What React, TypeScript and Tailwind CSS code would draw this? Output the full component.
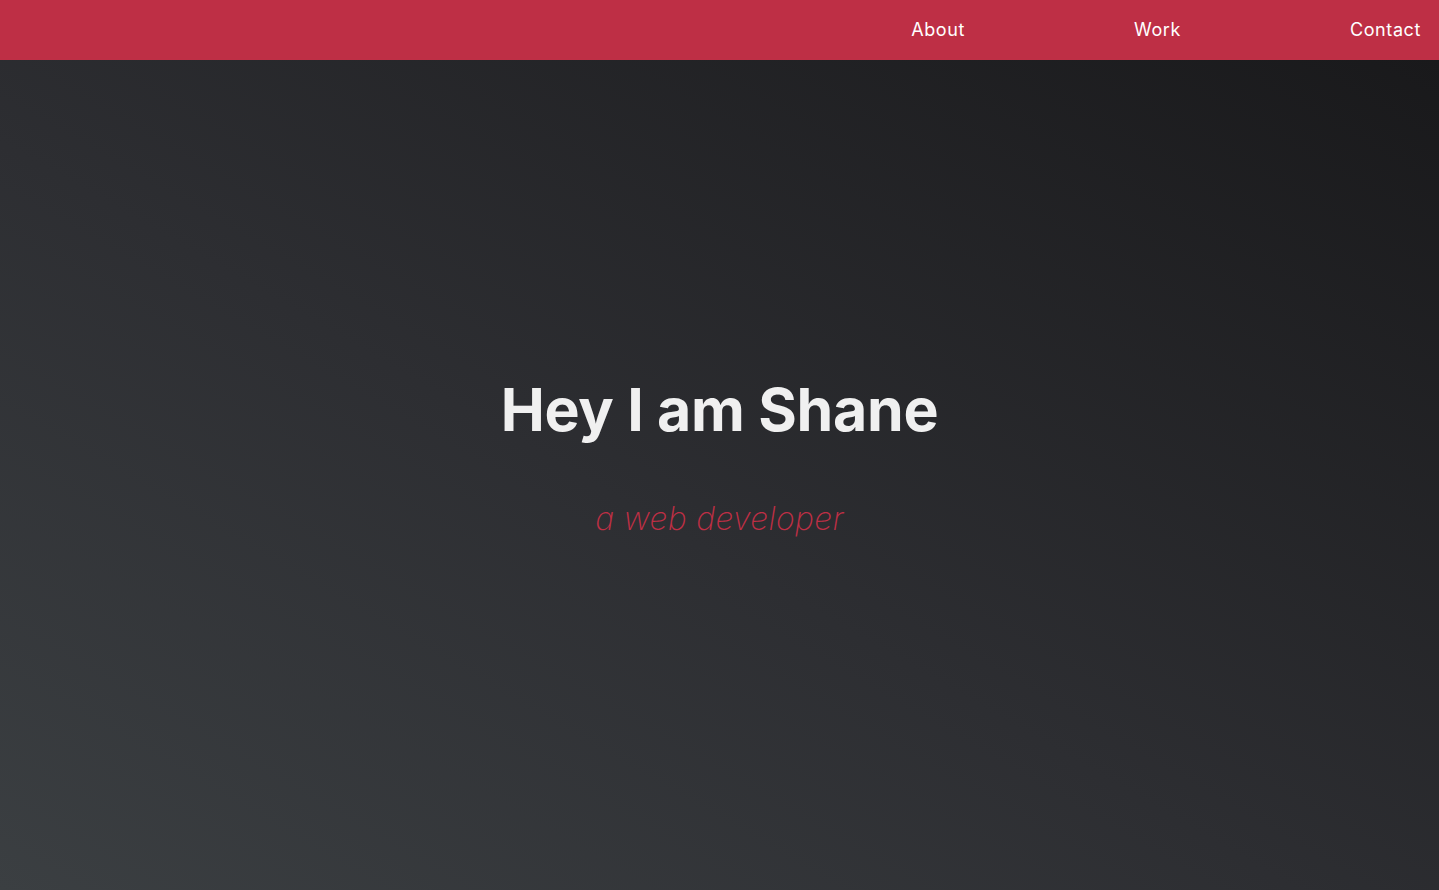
export default function App() {
  return (
    <div className="min-h-screen flex flex-col">
      <nav className="h-[60px] bg-[#be2f45] flex items-center justify-end pr-[18px]">
        <ul className="flex items-center gap-[169px] text-[18px] tracking-[0.6px] text-white font-['Inter',sans-serif] pb-[1px]">
          <li>About</li>
          <li>Work</li>
          <li>Contact</li>
        </ul>
      </nav>
      <main className="h-[830px] bg-[linear-gradient(to_top_right,#3b3f42_0%,#2d2e32_45%,#19191b_100%)] flex flex-col items-center justify-center pb-[36px]">
        <h1 className="text-[59px] font-bold text-[#f0f0f0] tracking-[-0.3px] leading-none font-['Inter',sans-serif]">
          Hey I am Shane
        </h1>
        <p className="mt-[64px] text-[32px] tracking-[0.3px] italic font-extralight text-[#be2f45] font-['Inter',sans-serif] leading-none">
          a web developer
        </p>
      </main>
    </div>
  );
}
